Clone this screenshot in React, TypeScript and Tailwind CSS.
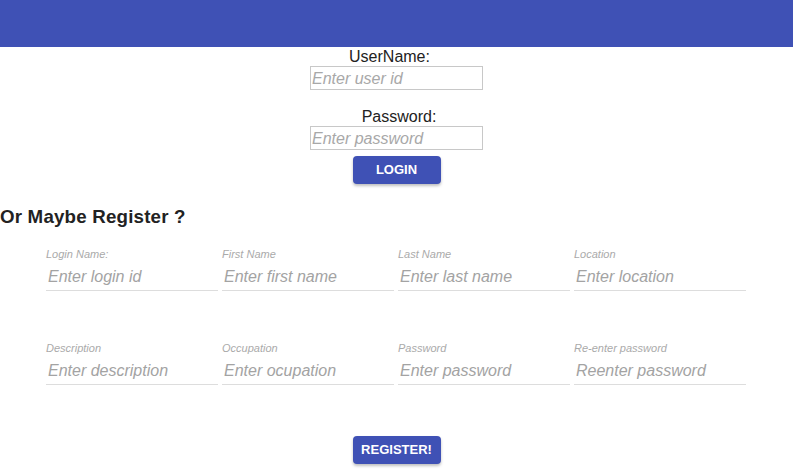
import React from "react";

const font = { fontFamily: '"Liberation Sans", Arial, Helvetica, sans-serif' };

function Field({ label, placeholder }: { label: string; placeholder: string }) {
  return (
    <div className="flex flex-col">
      <span className="text-[11px] leading-[13px] italic text-[#aaa] pt-[1px]">{label}</span>
      <input
        placeholder={placeholder}
        className="h-[30px] border-b border-[#ddd] outline-none text-[16px] italic placeholder:text-[#a3a3a3] px-[2px] pt-[3px] pb-0 bg-transparent"
      />
    </div>
  );
}

export default function App() {
  return (
    <div className="w-[793px] h-[474px] bg-white text-[#222] overflow-hidden" style={font}>
      <div className="h-[47px] bg-[#3f51b5]" />
      <div className="flex flex-col items-center">
        <label className="text-[16px] leading-[18px] h-[19px] pt-[1px] mr-[14px]">UserName:</label>
        <input
          placeholder="Enter user id"
          className="w-[173px] h-[24px] border border-[#c8c8c8] px-[1px] pt-[1px] text-[16px] italic placeholder:text-[#a8a8a8] outline-none"
        />
        <div className="h-[18px]" />
        <label className="text-[16px] leading-[18px] h-[18px] ml-[5px]">Password:</label>
        <input
          placeholder="Enter password"
          className="w-[173px] h-[24px] border border-[#c8c8c8] px-[1px] pt-[1px] text-[16px] italic placeholder:text-[#a8a8a8] outline-none"
        />
        <button className="mt-[6px] w-[88px] h-[28px] rounded-[4px] bg-[#3f51b5] text-white text-[13px] font-bold shadow-[0_2px_3px_rgba(0,0,0,0.25)]">
          LOGIN
        </button>
      </div>
      <h3 className="mt-[22px] text-[18.72px] leading-[22px] font-bold tracking-[0.2px]">Or Maybe Register ?</h3>
      <div className="w-[700px] mx-[46px] mt-[19px] grid grid-cols-4 gap-x-[4px] gap-y-[50px]">
        <Field label="Login Name:" placeholder="Enter login id" />
        <Field label="First Name" placeholder="Enter first name" />
        <Field label="Last Name" placeholder="Enter last name" />
        <Field label="Location" placeholder="Enter location" />
        <Field label="Description" placeholder="Enter description" />
        <Field label="Occupation" placeholder="Enter ocupation" />
        <Field label="Password" placeholder="Enter password" />
        <Field label="Re-enter password" placeholder="Reenter password" />
      </div>
      <div className="flex justify-center mt-[51px]">
        <button className="w-[88px] h-[28px] rounded-[4px] bg-[#3f51b5] text-white text-[13px] font-bold shadow-[0_2px_3px_rgba(0,0,0,0.25)]">
          REGISTER!
        </button>
      </div>
    </div>
  );
}
